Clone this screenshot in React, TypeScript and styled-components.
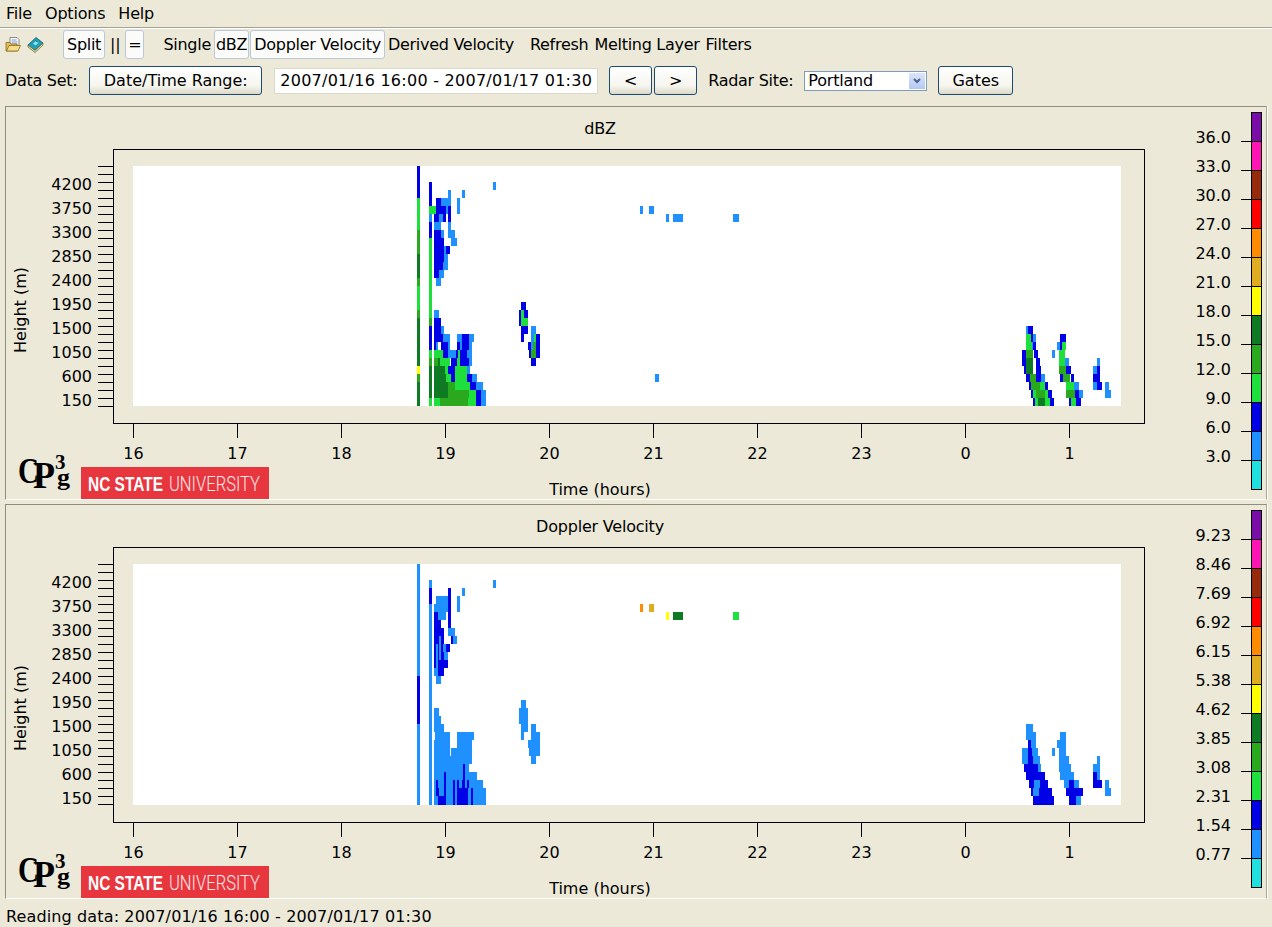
import React from "react";
import styled, { createGlobalStyle } from "styled-components";

const UI_FONT = `"DejaVu Sans", Verdana, sans-serif`;

const GlobalStyle = createGlobalStyle`
  html, body {
    margin: 0;
    padding: 0;
    background: #ece9d8;
  }
  body {
    font-family: ${UI_FONT};
    font-size: 16px;
    color: #000;
    overflow: hidden;
  }
`;

const Window = styled.div`
  width: 1272px;
  height: 927px;
  display: flex;
  flex-direction: column;
  background: #ece9d8;
  overflow: hidden;
`;

const MenuBar = styled.div`
  height: 27px;
  display: flex;
  align-items: center;
  gap: 13px;
  padding-left: 6px;
  border-bottom: 1px solid #a5a394;
  box-shadow: 0 1px 0 #fff;
  letter-spacing: -0.2px;
  box-sizing: content-box;
`;

const IconRow = styled.div`
  height: 29px;
  margin-top: 2px;
  padding-left: 5px;
  display: flex;
  align-items: center;
  letter-spacing: -0.28px;
`;

const Spacer = styled.div<{ $w: number }>`
  width: ${(p) => p.$w}px;
  flex: none;
`;

const ToolIcon = styled.svg`
  width: 17px;
  height: 17px;
  flex: none;
`;

const ToolButton = styled.div<{ $pad: number }>`
  height: 29px;
  box-sizing: border-box;
  padding: 0 ${(p) => p.$pad}px;
  display: flex;
  align-items: center;
  background: #fbfbf9;
  border: 1px solid #bcc8d6;
  border-radius: 3px;
`;

const ToolLabel = styled.div`
  white-space: pre;
`;

const FormRow = styled.div`
  height: 29px;
  margin-top: 7px;
  padding-left: 5px;
  display: flex;
  align-items: center;
`;

const FormLabel = styled.div`
  white-space: pre;
  letter-spacing: -0.3px;
`;

const PushButton = styled.div<{ $w: number }>`
  width: ${(p) => p.$w}px;
  height: 29px;
  box-sizing: border-box;
  display: flex;
  align-items: center;
  justify-content: center;
  border: 1px solid #1c4a72;
  border-radius: 3px;
  background: linear-gradient(#ffffff, #f6f5ee 70%, #dcd9c8);
`;

const RangeField = styled.div`
  width: 324px;
  height: 26px;
  box-sizing: border-box;
  padding-left: 5px;
  display: flex;
  align-items: center;
  background: #fff;
  border: 1px solid #dcd9c9;
  letter-spacing: 0.26px;
  white-space: nowrap;
`;

const SiteSelect = styled.div`
  width: 123px;
  height: 20px;
  box-sizing: border-box;
  padding: 0 1px 0 3px;
  display: flex;
  align-items: center;
  justify-content: space-between;
  background: #fff;
  border: 1px solid #7f9db9;
  letter-spacing: -0.2px;
`;

const SelectArrow = styled.div`
  width: 16px;
  height: 16px;
  display: flex;
  align-items: center;
  justify-content: center;
  background: linear-gradient(#dbe6fb, #b3c8f5);
`;

const Panels = styled.div`
  margin-top: 11px;
  display: flex;
  flex-direction: column;
  gap: 4px;
`;

const PanelBox = styled.div<{ $extra: number }>`
  height: ${(p) => 394 + p.$extra}px;
  margin: 0 5px;
  box-sizing: border-box;
  display: flex;
  align-items: flex-start;
  border: 1px solid #8f8e7c;
  border-right-color: #a9a897;
  border-bottom-color: #fff;
  box-shadow: 1px 0 0 #fff;
`;

const ChartColumn = styled.div`
  width: 1188px;
  flex: none;
  display: flex;
  flex-direction: column;
`;

const PanelTitle = styled.div`
  height: 33px;
  box-sizing: border-box;
  padding-top: 12px;
  line-height: 20px;
  text-align: center;
  letter-spacing: -0.2px;
`;

const PlotSvg = styled.svg<{ $extra: number }>`
  display: block;
  width: 1188px;
  height: ${(p) => 325 + p.$extra}px;
  margin-bottom: -4px;
  font-family: ${UI_FONT};
  font-size: 16px;
`;

const Footer = styled.div`
  height: 38px;
  display: grid;
  grid-template-columns: 1fr auto 1fr;
  align-items: end;
`;

const AxisLabel = styled.div`
  line-height: 20px;
  position: relative;
  top: 1px;
`;

const LogoSvg = styled.svg`
  display: block;
  width: 270px;
  height: 45px;
  margin-top: -7px;
  overflow: visible;
`;

const LegendSvg = styled.svg`
  display: block;
  width: 72px;
  height: 392px;
  font-family: ${UI_FONT};
  font-size: 16px;
`;

const StatusBar = styled.div`
  flex: 1;
  display: flex;
  align-items: flex-end;
  padding-left: 6px;
  line-height: 20px;
  letter-spacing: 0.13px;
`;

const COLORS: Record<string, string> = {
  c: "#1fdfdf",
  l: "#1e90ff",
  b: "#0000e6",
  g: "#1edf3c",
  m: "#2aa81e",
  d: "#0e7a24",
  y: "#ffff00",
  u: "#e0ac20",
  o: "#ff8c00",
  r: "#ff0000",
  w: "#962a0a",
  p: "#ff14b4",
  v: "#7a0ca8",
};

const LEGEND_ORDER = ["v", "p", "w", "r", "o", "u", "y", "d", "m", "g", "b", "l", "c"];

// each row: "x1-x2colour", rows count down from the top of the white area
const DBZ_ROWS: Record<number, string> = {
  0: "417-420b",
  1: "417-420b",
  2: "417-420b 429-432b 493-496l",
  3: "417-420b 429-432b 448-451l 462-465l",
  4: "417-420g 429-432b 436-441b 441-451l 457-460l",
  5: "417-420g 429-434g 434-436g 436-446b 446-448l 448-451b 457-460l 640-643l 649-654l",
  6: "417-420g 429-432l 434-439b 439-443l 443-446b 448-451b 666-669l 673-683l 733-739l",
  7: "417-420g 429-432b 434-441l 448-451l",
  8: "417-420m 429-432b 434-441b 441-444l 448-455l",
  9: "417-420m 429-432g 434-444b 451-457l",
  10: "417-420m 429-432g 434-444b 444-446l 446-450b",
  11: "417-420d 429-432g 434-444b 444-448l",
  12: "417-420d 429-432g 434-443b 443-448l",
  13: "417-420d 429-432g 434-439b 439-444l",
  14: "417-420m 429-432g 436-441l",
  15: "417-420g 429-432g",
  16: "417-420g 429-432g",
  17: "417-420g 429-432g 521-526b",
  18: "417-420m 429-432g 434-439l 519-521b 521-524g 524-528b",
  19: "417-420d 429-432m 434-441b 519-521b 521-528g",
  20: "417-420d 429-432b 434-441b 441-444l 521-528b 531-536l 1026-1028l 1028-1033b",
  21: "417-420d 429-432b 434-443b 443-450l 457-462l 462-469b 469-474l 521-524b 531-534l 534-536g 536-540b 1026-1031g 1031-1033b 1033-1036l 1060-1066b",
  22: "417-420d 429-432b 434-436b 436-438l 441-448b 448-450l 457-460b 460-462l 462-469b 469-472l 528-531b 531-533l 533-536m 536-540b 1026-1032g 1032-1033l 1033-1036b 1057-1060l 1060-1062b 1062-1066g",
  23: "417-420d 429-432g 434-443g 443-448b 448-456l 456-458b 458-460g 460-467b 467-472l 529-531b 531-536m 536-540b 1022-1026b 1026-1033m 1034-1038b 1052-1055l 1059-1065g",
  24: "417-420d 429-432m 434-438m 438-440d 440-450g 451-457b 457-460g 460-469b 469-472l 531-536b 1022-1026b 1026-1033d 1036-1040b 1059-1065g 1065-1069l 1097-1100l",
  25: "417-420y 429-432d 434-445d 445-448g 448-455b 455-467g 467-470l 1024-1026b 1026-1033d 1036-1041b 1059-1066m 1066-1071b 1093-1097l 1097-1100b",
  26: "417-420m 429-432d 434-446d 446-451g 451-455b 455-467g 467-472b 472-477l 655-659l 1026-1030b 1030-1036m 1036-1041b 1041-1045l 1060-1063b 1063-1070m 1071-1074b 1093-1100b",
  27: "417-420d 429-432d 434-448d 448-455m 455-470g 470-476b 476-483l 1029-1031b 1031-1040m 1040-1045g 1045-1048b 1066-1074g 1074-1079l 1093-1097l 1097-1102b 1105-1109l",
  28: "417-420d 429-432d 434-448d 448-469m 469-476g 476-481b 481-486l 1031-1033b 1033-1036g 1036-1045m 1045-1048g 1048-1052b 1066-1075m 1075-1079b 1079-1083l 1105-1111l",
  29: "417-420d 429-432g 434-440g 440-468m 468-476g 476-481b 481-486l 1033-1035b 1035-1038g 1038-1045d 1045-1050g 1050-1054b 1069-1071b 1071-1076g 1076-1081b",
};

const VELOCITY_ROWS: Record<number, string> = {
  0: "417-420l",
  1: "417-420l",
  2: "417-420l 429-432l 493-496l",
  3: "417-420l 429-432b 448-451b 462-465l",
  4: "417-420l 429-432b 436-448l 448-451b 457-460l",
  5: "417-420l 429-432l 434-448l 448-451b 457-460l 640-643o 649-654u",
  6: "417-420l 429-432l 434-438b 438-446l 448-451b 666-669y 673-683d 733-739g",
  7: "417-420l 429-432l 434-441b 448-451b",
  8: "417-420l 429-432l 434-444b 448-455l",
  9: "417-420l 429-432l 434-439b 439-441l 441-444b 451-453b 453-457l",
  10: "417-420l 429-432l 434-436b 436-438l 438-439b 439-441l 441-443b 443-446l 446-450b",
  11: "417-420l 429-432l 434-436b 436-438l 438-439b 439-441l 441-444b 444-448l",
  12: "417-420l 429-432l 434-436b 436-438l 438-448b",
  13: "417-420l 429-432l 434-438l 438-444b",
  14: "417-420b 429-432l 436-441l",
  15: "417-420b 429-432l",
  16: "417-420b 429-432l",
  17: "417-420b 429-432l 521-526l",
  18: "417-420b 429-432l 434-439l 519-528l",
  19: "417-420b 429-432l 434-441l 519-528l",
  20: "417-420l 429-432l 434-444l 521-528l 531-536l 1026-1033l",
  21: "417-420l 429-432l 435-450l 457-474l 521-524l 531-540l 1026-1036l 1060-1066l",
  22: "417-420l 429-432l 434-450l 457-472l 528-540l 1028-1031b 1031-1036l 1057-1066l",
  23: "417-420l 429-432l 434-450l 451-472l 529-540l 1022-1028l 1028-1032b 1032-1038l 1052-1055l 1059-1066l",
  24: "417-420l 429-432l 434-472l 531-536l 1022-1028l 1028-1033b 1033-1040l 1059-1069l 1097-1100l",
  25: "417-420l 429-432l 434-463l 463-465b 465-469l 1024-1038b 1038-1041l 1059-1071l 1093-1100l",
  26: "417-420l 429-432l 434-444l 444-446b 446-463l 463-465b 465-477l 1026-1045b 1060-1074l 1093-1097b 1097-1100l",
  27: "417-420l 429-432l 434-436l 436-438b 438-444l 444-446b 446-453l 453-455b 455-457l 457-459b 459-462l 462-465b 465-467l 467-469b 469-483l 1029-1034b 1034-1040l 1040-1048b 1064-1069l 1069-1074b 1074-1079l 1093-1102b 1105-1109l",
  28: "417-420l 429-432l 434-436l 436-439b 439-444l 444-446b 446-453l 453-455b 455-457l 457-468b 468-471l 471-473b 473-486l 1031-1033b 1033-1039l 1039-1052b 1066-1078b 1078-1083b 1105-1111l",
  29: "417-420l 429-432l 434-438l 438-446b 446-453l 453-455b 455-457l 457-468b 468-471l 471-473b 473-486l 1033-1054b 1069-1076b 1076-1081l",
};

const HOURS = [16, 17, 18, 19, 20, 21, 22, 23, 0, 1];
const LEFT_TICKS = Array.from({ length: 31 }, (_, i) => 166 + i * 8);
const HEIGHTS = [4200, 3750, 3300, 2850, 2400, 1950, 1500, 1050, 600, 150];

function parseCells(rows: Record<number, string>, extra: number) {
  const cells: { x: number; w: number; y: number; h: number; fill: string }[] = [];
  Object.keys(rows).forEach((key) => {
    const r = Number(key);
    rows[r].split(" ").forEach((part) => {
      const m = part.match(/^(\d+)-(\d+)([a-z])$/);
      if (!m) return;
      cells.push({
        x: Number(m[1]),
        w: Number(m[2]) - Number(m[1]),
        y: 166 + r * 8,
        h: r === 29 ? 8 + extra : 8,
        fill: COLORS[m[3]],
      });
    });
  });
  return cells;
}

const FolderIcon = () => (
  <ToolIcon viewBox="0 0 17 17">
    <path d="M5 1.5h7l2 2v6H5z" fill="#fff" stroke="#6f6f6f" strokeWidth="0.8" />
    <path d="M6.5 4h5M6.5 6h6M6.5 8h6" stroke="#5a7fb5" strokeWidth="0.8" />
    <path d="M1 6.5h4l1 1.5h6v7H1z" fill="#e2bd5c" stroke="#8a6a1c" strokeWidth="0.8" />
    <path d="M1.5 15l2.5-5.5h11.5L13 15z" fill="#f7dd8a" stroke="#8a6a1c" strokeWidth="0.8" />
  </ToolIcon>
);

const BookIcon = () => (
  <ToolIcon viewBox="0 0 17 17">
    <path d="M1 9l8-7.5 7 5.5-8 7.5z" fill="#1f9fb8" stroke="#0f5b6b" strokeWidth="0.8" />
    <path d="M1 9v2l7 5.5 8-7.5V7l-8 7.5z" fill="#f4e9a6" stroke="#5e6a38" strokeWidth="0.8" />
    <path d="M6 7.5l3-2.5 2.5 2-3 2.5z" fill="#8fe0ea" />
    <path d="M8.5 4.5l2 1.5" stroke="#0f5b6b" strokeWidth="0.7" />
  </ToolIcon>
);

const ArrowIcon = () => (
  <svg width="10" height="8" viewBox="0 0 10 8">
    <path d="M2 2l3 3 3-3" fill="none" stroke="#4d6185" strokeWidth="2" />
  </svg>
);

const Logo = () => (
  <LogoSvg viewBox="6 455 270 45">
    <g fontFamily='"Liberation Serif", serif' fontWeight="700" fill="#000">
      <text x="18" y="484" fontSize="36" textLength="21" lengthAdjust="spacingAndGlyphs">C</text>
      <text x="33" y="489" fontSize="38" textLength="22" lengthAdjust="spacingAndGlyphs">P</text>
      <text x="55" y="470" fontSize="21">3</text>
      <text x="57" y="486" fontSize="24" textLength="13" lengthAdjust="spacingAndGlyphs">g</text>
    </g>
    <rect x="81" y="468" width="188" height="32" fill="#e8363f" />
    <text x="88" y="492" fontFamily='"Liberation Sans", sans-serif' fontWeight="700" fontSize="20" fill="#fff" textLength="75" lengthAdjust="spacingAndGlyphs">NC STATE</text>
    <text x="169" y="492" fontFamily='Roboto, "Liberation Sans", sans-serif' fontWeight="300" fontSize="20" fill="#fde8e9" textLength="91" lengthAdjust="spacingAndGlyphs">UNIVERSITY</text>
  </LogoSvg>
);

const Plot = ({ rows, extra }: { rows: Record<number, string>; extra: number }) => (
  <PlotSvg $extra={extra} viewBox={`6 140 1188 ${325 + extra}`} shapeRendering="crispEdges">
    <rect x="113.5" y="149.5" width="1031" height={274 + extra} fill="#ece9d8" stroke="#000" />
    <rect x="133" y="166" width="988" height={240 + extra} fill="#fff" />
    {parseCells(rows, extra).map((c, i) => (
      <rect key={i} x={c.x} y={c.y} width={c.w} height={c.h} fill={c.fill} />
    ))}
    {LEFT_TICKS.map((y) => (
      <line key={y} x1="98" x2="113" y1={y + 0.5} y2={y + 0.5} stroke="#000" />
    ))}
    {HEIGHTS.map((h, i) => (
      <text key={h} x="92" y={189.5 + i * 24} textAnchor="end">{h}</text>
    ))}
    {HOURS.map((h, i) => (
      <g key={i}>
        <line x1={133.5 + i * 104} x2={133.5 + i * 104} y1={424 + extra} y2={438 + extra} stroke="#000" />
        <text x={133.5 + i * 104} y={458.5 + extra} textAnchor="middle">{h}</text>
      </g>
    ))}
    <text transform="translate(26 310) rotate(-90)" textAnchor="middle">Height (m)</text>
  </PlotSvg>
);

const Legend = ({ labels }: { labels: string[] }) => (
  <LegendSvg viewBox="1194 107 72 392" shapeRendering="crispEdges">
    {LEGEND_ORDER.map((c, i) => (
      <rect key={c} x="1251" y={112 + i * 29} width="10" height="29" fill={COLORS[c]} />
    ))}
    <rect x="1251.5" y="112.5" width="10" height="377" fill="none" stroke="#000" />
    {labels.map((label, i) => (
      <g key={label}>
        <line x1="1241" x2="1261" y1={141.5 + i * 29} y2={141.5 + i * 29} stroke="#000" />
        <text x="1231" y={143 + i * 29} textAnchor="end">{label}</text>
      </g>
    ))}
  </LegendSvg>
);

type PanelProps = { title: string; rows: Record<number, string>; labels: string[]; extra?: number };

const Panel = ({ title, rows, labels, extra = 0 }: PanelProps) => (
  <PanelBox $extra={extra}>
    <ChartColumn>
      <PanelTitle>{title}</PanelTitle>
      <Plot rows={rows} extra={extra} />
      <Footer>
        <Logo />
        <AxisLabel>Time (hours)</AxisLabel>
      </Footer>
    </ChartColumn>
    <Legend labels={labels} />
  </PanelBox>
);

export default function App() {
  return (
    <>
      <GlobalStyle />
      <Window>
        <MenuBar>
          <span>File</span>
          <span>Options</span>
          <span>Help</span>
        </MenuBar>
        <IconRow>
          <FolderIcon />
          <Spacer $w={5} />
          <BookIcon />
          <Spacer $w={19} />
          <ToolButton $pad={3}>Split</ToolButton>
          <Spacer $w={5} />
          <ToolLabel>||</ToolLabel>
          <Spacer $w={5} />
          <ToolButton $pad={2}>=</ToolButton>
          <Spacer $w={19} />
          <ToolLabel>Single</ToolLabel>
          <Spacer $w={3} />
          <ToolButton $pad={1}>dBZ</ToolButton>
          <Spacer $w={1} />
          <ToolButton $pad={3}>Doppler Velocity</ToolButton>
          <Spacer $w={3} />
          <ToolLabel>Derived Velocity</ToolLabel>
          <Spacer $w={16} />
          <ToolLabel>Refresh</ToolLabel>
          <Spacer $w={6} />
          <ToolLabel>Melting Layer</ToolLabel>
          <Spacer $w={6} />
          <ToolLabel>Filters</ToolLabel>
        </IconRow>
        <FormRow>
          <FormLabel>Data Set:</FormLabel>
          <Spacer $w={12} />
          <PushButton $w={173}>Date/Time Range:</PushButton>
          <Spacer $w={12} />
          <RangeField>2007/01/16 16:00 - 2007/01/17 01:30</RangeField>
          <Spacer $w={11} />
          <PushButton $w={43}>&lt;</PushButton>
          <Spacer $w={2} />
          <PushButton $w={43}>&gt;</PushButton>
          <Spacer $w={11} />
          <FormLabel>Radar Site:</FormLabel>
          <Spacer $w={11} />
          <SiteSelect>
            Portland
            <SelectArrow>
              <ArrowIcon />
            </SelectArrow>
          </SiteSelect>
          <Spacer $w={11} />
          <PushButton $w={75}>Gates</PushButton>
        </FormRow>
        <Panels>
          <Panel
            title="dBZ"
            rows={DBZ_ROWS}
            labels={["36.0", "33.0", "30.0", "27.0", "24.0", "21.0", "18.0", "15.0", "12.0", "9.0", "6.0", "3.0"]}
          />
          <Panel
            title="Doppler Velocity"
            rows={VELOCITY_ROWS}
            labels={["9.23", "8.46", "7.69", "6.92", "6.15", "5.38", "4.62", "3.85", "3.08", "2.31", "1.54", "0.77"]}
            extra={1}
          />
        </Panels>
        <StatusBar>Reading data: 2007/01/16 16:00 - 2007/01/17 01:30</StatusBar>
      </Window>
    </>
  );
}
